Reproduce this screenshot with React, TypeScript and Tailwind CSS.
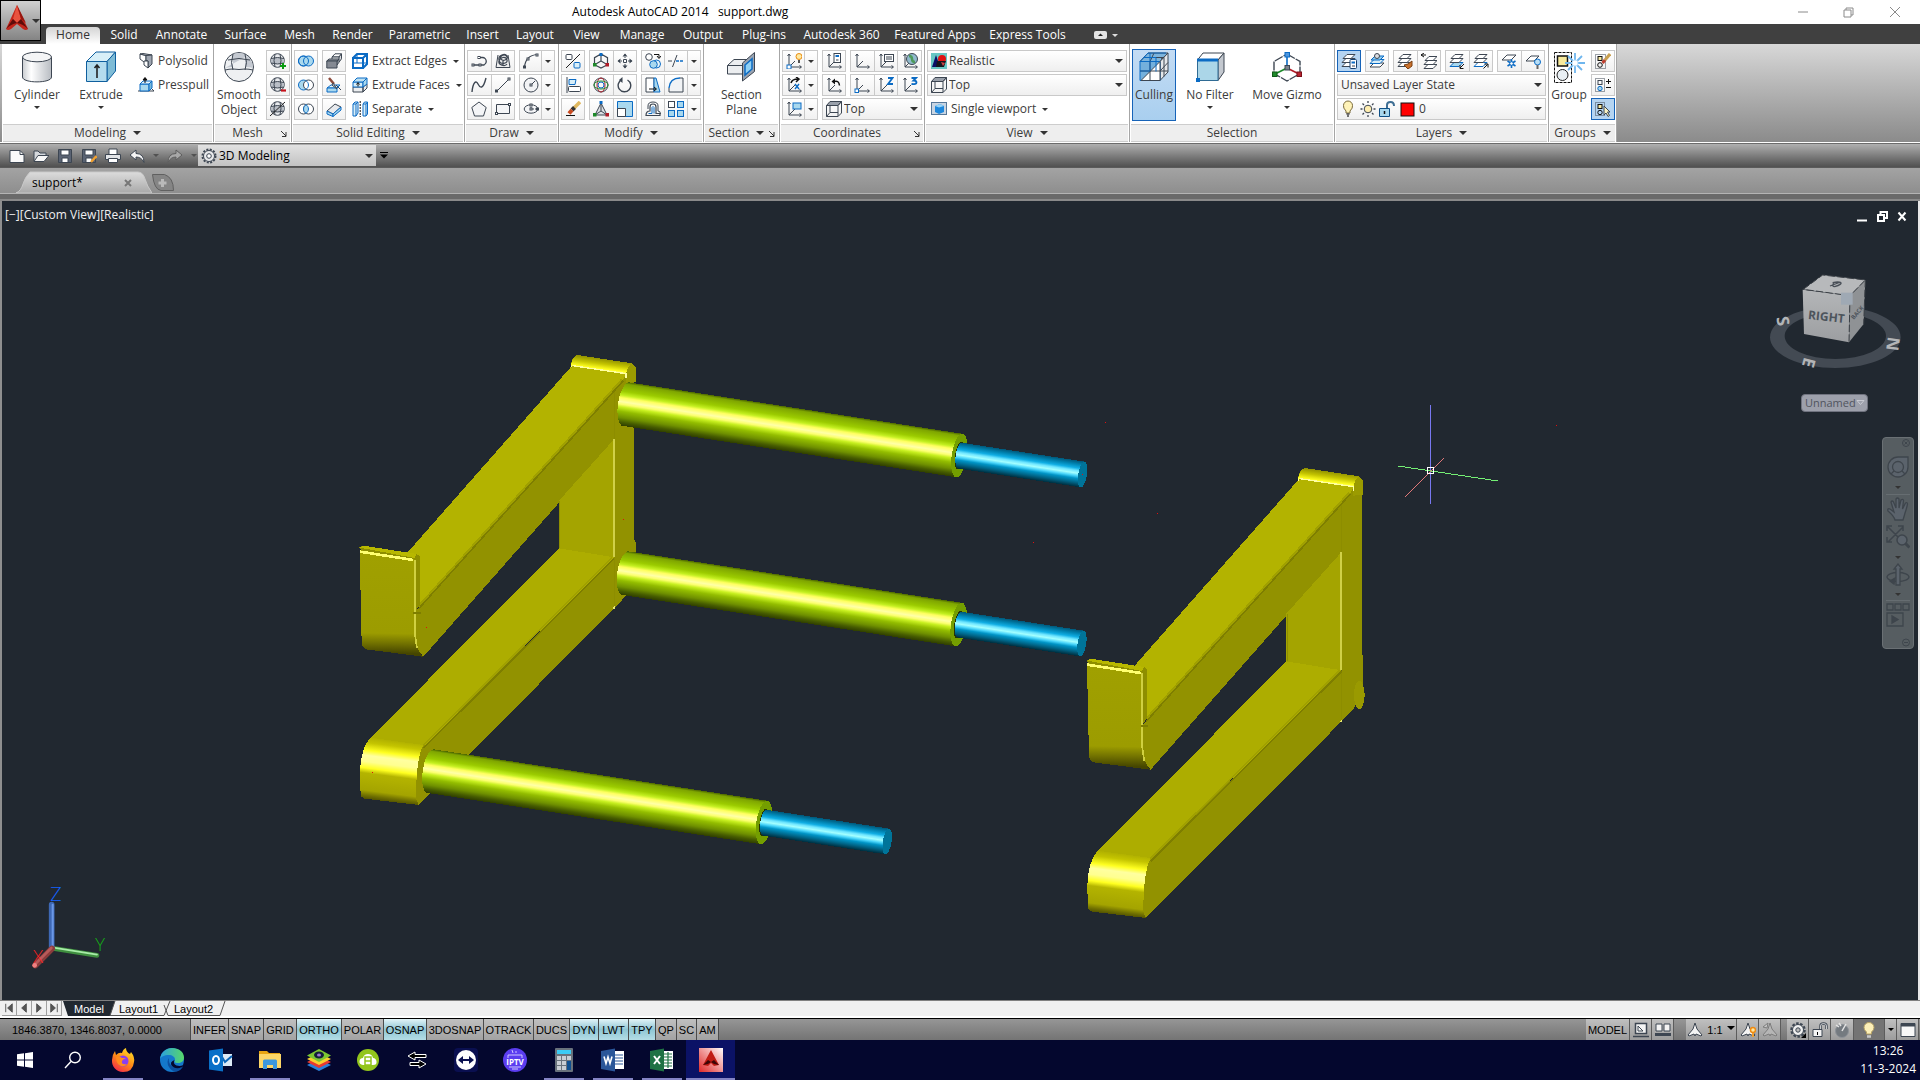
import type { ReactNode } from 'react';
import clsx from 'clsx';

const INK = '#3d4652';
const BLUE = '#0b6bc4';
const SKY = '#a9d8ee';
const UI_FONT = "font-['Open_Sans','Noto_Sans',sans-serif]";
const STATUS_FONT = "font-['Liberation_Sans',Arial,sans-serif]";

function Icon({
  children,
  size = 16,
  className,
}: {
  children: ReactNode;
  size?: number;
  className?: string;
}) {
  return (
    <svg
      aria-hidden="true"
      width={size}
      height={size}
      viewBox={`0 0 ${size} ${size}`}
      fill="none"
      stroke={INK}
      className={clsx('shrink-0', className)}
    >
      {children}
    </svg>
  );
}

function Caret({ large, className }: { large?: boolean; className?: string }) {
  return (
    <svg
      aria-hidden="true"
      width={large ? 8 : 6}
      height={large ? 4 : 3}
      viewBox="0 0 8 4"
      className={clsx('shrink-0 fill-[#333333]', className)}
    >
      <path d="M0 0h8L4 4z" />
    </svg>
  );
}

/* ---------- small ribbon drawings ---------- */

function Globe() {
  return (
    <>
      <circle cx="7.5" cy="7.5" r="6.8" fill="#e9ebee" />
      <path d="M1 6q6.500-2.500 13 0v4q-6.500 2-13 0z" fill="#b9bec6" stroke="none" />
      <path d="M1 5.500q6.500-2 13 0M1 10q6.500 2 13 0M5 1.200q-2 6.300 0 12.600M10 1.200q2 6.300 0 12.600" />
    </>
  );
}

function Axes() {
  return <path d="M3 1v13h12M3 14 9 8M1.500 3 3 1l1.500 2M13.500 12.500 15.500 14l-2 1.500" strokeWidth="1" />;
}

function Sheets({ accent = INK, fill = '#ffffff' }: { accent?: string; fill?: string }) {
  return (
    <>
      <path d="M1 13.500 5 9.500h9l-4 4z" fill={fill} stroke={accent} />
      <path d="M1 9.500 5 5.500h9l-4 4z" fill="#ffffff" />
      <path d="M2 5.500 6 1.500h8l-4 4z" fill="#ffffff" />
    </>
  );
}

const Node = ({ x, y }: { x: number; y: number }) => (
  <rect x={x - 1} y={y - 1} width="2" height="2" fill="#ffffff" strokeWidth="1" />
);

const glyphs = {
  polysolid: (
    <>
      <path d="M2 1 8 2.500v5L6 9 2 6z" fill="#ffffff" />
      <path d="M2 1 5 .500 14 2 8 2.500z" fill="#c5c9d0" />
      <path d="M8 2.500 14 2v9l-4 4V8l-2-.500z" fill="#9fa6b1" />
      <path d="M6 8h4v7l-4-3z" fill="#ffffff" />
    </>
  ),
  presspull: (
    <>
      <path d="M0 14h16l-3-3" />
      <path d="M2 7h9v7H2z" fill={SKY} stroke={BLUE} />
      <path d="M2 7 5 4h9l-3 3z" fill="#e4f4fb" stroke={BLUE} />
      <path d="M11 7l3-3v7l-3 3z" fill="#79b9da" stroke={BLUE} />
      <path d="M7 6V1M5 3l2-2.500L9 3z" fill="#111" stroke="#111" />
    </>
  ),
  meshMore: (
    <>
      <Globe />
      <path d="M13 10v6M10 13h6" stroke="#0a9a12" strokeWidth="2" />
    </>
  ),
  meshLess: (
    <>
      <Globe />
      <path d="M11 13.500h5" stroke="#c4101a" strokeWidth="2.200" />
    </>
  ),
  meshRefine: (
    <>
      <Globe />
      <path d="M0 15 15 1" stroke="#222" />
    </>
  ),
  union: (
    <g stroke={BLUE}>
      <circle cx="5.500" cy="8" r="5" fill={SKY} />
      <circle cx="10.500" cy="8" r="5" fill={SKY} />
      <circle cx="5.500" cy="8" r="5" />
    </g>
  ),
  subtract: (
    <>
      <circle cx="5.500" cy="8" r="5" fill={SKY} stroke={BLUE} />
      <circle cx="10.500" cy="8" r="5" fill="#ffffff" />
      <path d="M8 3.700a5 5 0 0 1 0 8.600" stroke={BLUE} />
    </>
  ),
  intersect: (
    <>
      <circle cx="5.500" cy="8" r="5" fill="#fff" />
      <circle cx="10.500" cy="8" r="5" fill="#fff" />
      <path d="M8 3.700a5 5 0 0 1 0 8.600 5 5 0 0 1 0-8.600z" fill={SKY} stroke={BLUE} />
    </>
  ),
  interfere: (
    <>
      <path d="M6 4 9 .800h6.500L13 4z" fill="#fff" />
      <path d="M13 4l2.500-3.200v5L11 12V8z" fill="#d7dade" />
      <path d="M6 4h7v4H6z" fill="#eee" />
      <path d="M.800 8 3 6h10l-2 2z" fill="#a2a6ad" />
      <path d="M.800 8H11v7H.800z" fill="#858a93" />
    </>
  ),
  slice: (
    <>
      <path d="M1 11 5 8h9l-3 3z" fill="#e4f4fb" stroke={BLUE} />
      <path d="M1 11h10v4H1z" fill={SKY} stroke={BLUE} />
      <path d="M10 8l5 5" />
      <path d="M3 1l5 6" stroke="#8c4a3c" strokeWidth="2.500" />
      <path d="M7 6l4 6-5-4z" fill="#d5d8dd" />
    </>
  ),
  thicken: (
    <>
      <path d="M1 10 9 3l6 3-8 7z" fill="#e8eaed" />
      <path d="M1 10v3l6 2.500V13z" fill={SKY} stroke={BLUE} />
      <path d="M7 13v2.500L15 9V6z" fill={SKY} stroke={BLUE} />
    </>
  ),
  extractEdges: (
    <g stroke={BLUE} strokeWidth="2">
      <path d="M1 5h10v10H1zM1 5l4-4h10l-4 4M15 1v10l-4 4" />
      <path d="M5 1v9H1M5 10h10" strokeWidth="1" />
    </g>
  ),
  extrudeFaces: (
    <>
      <path d="M1 10h10v5H1zM11 10l4-3v4l-4 4z" fill="#eceef0" />
      <path d="M1 5h10v5H1z" fill="#d8eef8" stroke={BLUE} />
      <path d="M1 5 5 1h10l-4 4z" fill="#bfe2f2" stroke={BLUE} />
      <path d="M11 5l4-4v6l-4 3z" fill={SKY} stroke={BLUE} />
      <path d="M6 9.500V6M4.500 7.500 6 5.500l1.500 2" stroke="#111" />
    </>
  ),
  separate: (
    <>
      <path d="M1 3h3v12H1zM1 3l2-2h3L4 3M6 1v11l-2 3" fill="#d8eef8" stroke={BLUE} />
      <path d="M11 3h3v12h-3zM11 3l1.500-2h3L14 3M15.500 1v12L14 15" fill="#d8eef8" stroke={BLUE} />
      <path d="M8.200 0v16" stroke="#111" strokeDasharray="2 1" />
    </>
  ),
  polyline: (
    <>
      <path d="M1.500 12h12M9 4.500h2.500a3.700 3.700 0 0 1 0 7.500H2" strokeWidth="1.300" />
      <Node x={2} y={12} />
      <Node x={9} y={12} />
      <Node x={8} y={4.5} />
    </>
  ),
  helix: (
    <>
      <path d="M3 2 1 14.500h14L13 2" fill="#eee" />
      <path d="M12 4c-2-4-8-1-6 2s8 0 6-3-9-1-8 4 9 4 8 0-7-3-8 1 6 6 8 3M8 8v5" strokeWidth="1.200" />
    </>
  ),
  arc: (
    <>
      <path d="M1.500 14.500C2 7 6 2 14.500 1.500" strokeWidth="1.200" />
      <Node x={1.5} y={14} />
      <Node x={5} y={6} />
      <Node x={14} y={2} />
    </>
  ),
  spline: <path d="M1 15C2 5 5 3 7 7s5 6 8-6" strokeWidth="1.400" />,
  line: (
    <>
      <path d="M2 14 14 2" />
      <Node x={1.5} y={14} />
      <Node x={14} y={2} />
    </>
  ),
  circle: (
    <>
      <circle cx="8" cy="8" r="7" fill="#f2f3f5" />
      <path d="M8 8l4-4" />
      <Node x={8} y={8} />
    </>
  ),
  polygon: <path d="M8 1l7.200 5.500L12.500 15h-9L.800 6.500z" fill="#f4f5f7" />,
  rectangle: (
    <>
      <path d="M1.500 3.500h13v9h-13z" fill="#f4f5f7" />
      <Node x={14.5} y={3.5} />
      <Node x={1.5} y={12.5} />
    </>
  ),
  ellipse: (
    <>
      <ellipse cx="8" cy="8" rx="6.800" ry="4.200" fill="#f4f5f7" />
      <path d="M8 3v5h6" strokeDasharray="2 1" />
      <Node x={8} y={8} />
      <Node x={8} y={4} />
      <Node x={14.5} y={8} />
    </>
  ),
  mirror3d: (
    <>
      <rect x="1" y="1.500" width="6" height="5" rx="1" fill="#fff" />
      <rect x="9" y="9.500" width="6" height="5.500" rx="1" fill="#d8eef8" stroke={BLUE} />
      <path d="M1 15 15 1" stroke="#222" />
    </>
  ),
  gizmoMove: (
    <>
      <path d="M8 1l6.500 3.700v7L8 15l-6.500-3.300v-7zM8 1v7l6 3.500M8 8l-6 3.500" strokeWidth="1.200" />
      <rect x="6.500" y="0" width="3" height="3" fill={BLUE} stroke="none" />
      <rect x="0" y="10" width="3.500" height="3.500" fill="#1e8a2a" stroke="none" />
      <rect x="12.500" y="10" width="3.500" height="3.500" fill="#b01c28" stroke="none" />
    </>
  ),
  move: (
    <>
      <path d="M8 1v4M8 11v4M1 8h4M11 8h4" strokeDasharray="2 1" />
      <path d="M5.500 3.500 8 .500l2.500 3zM5.500 12.500 8 15.500l2.500-3zM3.500 5.500.500 8l3 2.500zM12.500 5.500 15.500 8l-3 2.500z" fill={INK} stroke="none" />
      <path d="M6.500 6.500h3v3h-3z" fill="#fff" />
    </>
  ),
  copy: (
    <>
      <circle cx="4" cy="4" r="3.300" fill="#fff" />
      <circle cx="11.500" cy="11" r="4" fill="#e6f4fb" stroke={BLUE} />
      <circle cx="8.500" cy="11.500" r="3.800" fill={SKY} stroke={BLUE} />
      <path d="M9 1.500h5v3M12 3l2 2.500L16 3" stroke="#111" />
    </>
  ),
  trim: (
    <>
      <path d="M0 8h4M4.500 14 9 2" stroke={INK} />
      <path d="M8 8h8" stroke={BLUE} strokeDasharray="3 1" strokeWidth="1.300" />
    </>
  ),
  align3d: (
    <>
      <path d="M2 0v16" />
      <path d="M4 2.500h7l-1 5H4z" fill="#d8eef8" stroke={BLUE} />
      <rect x="3.500" y="9.500" width="12" height="5" rx="1" fill="#fff" />
    </>
  ),
  gizmoRotate: (
    <>
      <circle cx="8" cy="8" r="7" />
      <ellipse cx="8" cy="8" rx="4" ry="7" stroke="#b01c28" />
      <ellipse cx="8" cy="8" rx="7" ry="4" stroke="#1e8a2a" />
      <circle cx="8" cy="8" r="3" stroke={BLUE} />
    </>
  ),
  rotate: (
    <>
      <path d="M10.500 3A6.300 6.300 0 1 1 5 2.700" strokeWidth="1.400" />
      <path d="M5.500 0v6L2 3z" fill={INK} stroke="none" />
    </>
  ),
  stretch: (
    <>
      <path d="M1 1h8v14H1z" fill="#fff" />
      <path d="M9 1h2l4 14H9z" fill={SKY} stroke={BLUE} />
      <path d="M4 12h7M9 10l2.500 2L9 14" stroke="#111" />
    </>
  ),
  fillet: (
    <>
      <path d="M1 15C1 6 5 1 12 1h3v14z" fill="#f1f3f5" stroke="none" />
      <path d="M1 11C1.500 5 5 1 12 1" stroke={BLUE} strokeWidth="1.400" />
      <path d="M12 1h3v14H1v-4" />
    </>
  ),
  erase: (
    <>
      <path d="M1 14.500h9" stroke="#111" />
      <path d="M15 1 9 7" stroke="#e0b860" strokeWidth="3.500" />
      <path d="M9.500 6.500 7 9" stroke="#333" strokeWidth="4" />
      <path d="M7 9l-3 3.500" stroke="#c84a20" strokeWidth="4" />
    </>
  ),
  gizmoScale: (
    <>
      <path d="M8 2 2 14h12zM8 2v8l6 4M8 10l-6 4" fill="#dcdfe3" />
      <rect x="6.500" y="0" width="3" height="3" fill={BLUE} stroke="none" />
      <rect x="0" y="12" width="3.500" height="3.500" fill="#1e8a2a" stroke="none" />
      <rect x="12.500" y="12" width="3.500" height="3.500" fill="#b01c28" stroke="none" />
    </>
  ),
  scale: (
    <>
      <path d="M.500.500h15v15H.500z" fill={SKY} stroke={BLUE} />
      <path d="M.500 7.500h8v8h-8z" fill="#fff" />
    </>
  ),
  offset: (
    <>
      <path d="M1 14.500h14v-2h-4V6q0-3-3-3T5 6v4q-4 0-4 4.500z" strokeWidth="1.200" />
      <path d="M3 8V5q0-4 5-4t5 4v5q2.500 0 2.500 3" />
      <path d="M3.500 12.500H7V6.500q1-2 2 0v6" stroke={BLUE} />
    </>
  ),
  array: (
    <>
      <rect x="0.500" y="0.500" width="6" height="6" fill="#fff" />
      <rect x="9.500" y="0.500" width="6" height="6" fill={SKY} stroke={BLUE} />
      <rect x="0.500" y="9.500" width="6" height="6" fill={SKY} stroke={BLUE} />
      <rect x="9.500" y="9.500" width="6" height="6" fill={SKY} stroke={BLUE} />
    </>
  ),
  ucsLight: (
    <>
      <Axes />
      <rect x="1" y="12" width="4" height="4" fill="#fff" stroke={BLUE} />
      <circle cx="13" cy="3.500" r="3" fill="#ffe9a0" stroke="#e88b10" />
      <path d="M13 7v3" stroke="#555" strokeWidth="2" />
    </>
  ),
  ucsX: (
    <>
      <Axes />
      <path d="M5 6q1-4 7-4M10 0l3 2-3 3" stroke="#111" strokeWidth="1.500" />
      <path d="M9 7l4 5M13 7l-4 5" stroke={BLUE} strokeWidth="1.400" />
    </>
  ),
  ucsView: (
    <>
      <Axes />
      <rect x="7" y="2" width="8" height="6" fill={SKY} stroke={BLUE} />
    </>
  ),
  ucsManager: (
    <>
      <Axes />
      <rect x="8" y=".500" width="6.500" height="9" fill="#fff" />
      <path d="M9.500 3H13" stroke={BLUE} strokeWidth="2" />
      <path d="M10 7h2.500" />
    </>
  ),
  ucsPrevious: (
    <>
      <Axes />
      <path d="M5.500 4.500 9 1.500v6z" fill="#111" stroke="none" />
      <path d="M8 4.500q5-1.500 5.500 4" stroke="#111" strokeWidth="1.500" />
    </>
  ),
  ucs: <Axes />,
  ucsNamed: (
    <>
      <Axes />
      <rect x="6.500" y="1.500" width="9" height="7" fill="#fff" />
      <path d="M8 4h6M8 6h6" />
    </>
  ),
  ucsWorld: (
    <>
      <Axes />
      <circle cx="10" cy="6" r="5.500" fill="#8fb9cc" />
      <path d="M7 3q3 0 3 3t3 3" stroke="#4d9a5a" strokeWidth="2.500" />
    </>
  ),
  ucsOrigin: (
    <>
      <Axes />
      <rect x="1" y="12" width="3.500" height="3.500" fill="#fff" stroke={BLUE} />
    </>
  ),
  ucsZ: (
    <>
      <Axes />
      <path d="M10 1h4.500L10 7h5" stroke={BLUE} strokeWidth="1.800" />
    </>
  ),
  ucs3: (
    <>
      <Axes />
      <path d="M9.500 1h4.500l-2.500 2.500q3 0 3 2t-5 1.500" stroke={BLUE} strokeWidth="1.800" />
    </>
  ),
  cubeTop: (
    <>
      <path d="M.500 4.500 4 .500h11.500l-3.500 4z" fill="#9aa1ab" />
      <path d="M.500 4.500H12v11H.500zM12 4.500l3.500-4V12L12 15.500M4 4.500v7h8M4 11.500l-3.500 4" fill="none" />
    </>
  ),
  realistic: (
    <>
      <rect width="16" height="16" fill="#67c7c4" stroke="none" />
      <path d="M5 2 9 14H1z" fill="#0b0f66" stroke="none" />
      <circle cx="11" cy="6" r="4" fill="#e01212" stroke="none" />
      <path d="M6 8h9l-2 6H5z" fill="#15151c" stroke="none" />
      <path d="M10 9l4 1-2 3z" fill="#c44" stroke="none" />
    </>
  ),
  viewport: (
    <>
      <rect x=".500" y="1.500" width="15" height="12" fill="#c9d5e2" stroke="#56789a" />
      <path d="M4 5l5-2 4 2v6l-5 2-4-2z" fill="#1e88dd" stroke="none" />
      <path d="M4 5l5-2 4 2-5 1.500z" fill="#9bd5f8" stroke="none" />
    </>
  ),
  layerProps: (
    <>
      <Sheets />
      <rect x="9" y="6.500" width="6.500" height="9" rx="1" fill="#fff" stroke="#17406e" />
      <path d="M10.500 9.500H14" stroke={BLUE} strokeWidth="2" />
      <path d="M11 13h3" />
    </>
  ),
  layerState: (
    <>
      <path d="M1 14 5 10h10l-4 4z" fill="#fff" />
      <path d="M1 10.500 5 6.500h10l-4 4z" fill="#d8eef8" stroke={BLUE} />
      <path d="M2 7 6 3h9l-4 4z" fill="#8fcdf0" stroke={BLUE} />
      <circle cx="8" cy="3" r="2.500" fill="#d9dce0" />
    </>
  ),
  layerMatch: (
    <>
      <Sheets />
      <path d="M15 8l-4 3-4 1 4 4 4-3z" fill="#c9712c" stroke="#7a3f12" />
    </>
  ),
  layerPrevious: (
    <>
      <g transform="translate(2 2)">
        <Sheets />
      </g>
      <path d="M0 2h5M3 0 0 2l3 2" stroke="#111" />
    </>
  ),
  layerIsolate: (
    <>
      <Sheets accent={BLUE} fill={SKY} />
      <path d="M15 11l-4 4M11 12v3.500h3.500" stroke="#111" />
    </>
  ),
  layerUnisolate: (
    <>
      <Sheets accent={BLUE} />
      <path d="M10.500 15.500l4-4M11.500 11h3.500v3.500" stroke="#111" />
    </>
  ),
  layerFreeze: (
    <>
      <path d="M1 7 6 2h9l-5 5z" fill="#fff" />
      <path d="M10.500 6v9M6.500 8l8 5M14.500 8l-8 5" stroke={BLUE} strokeWidth="1.600" />
      <circle cx="10.500" cy="10.500" r="1.800" fill="#fff" stroke={BLUE} />
    </>
  ),
  layerOff: (
    <>
      <path d="M1 8 6 3h8l-5 5z" fill="#fff" />
      <circle cx="12.500" cy="9" r="3" fill="#b9def5" stroke={BLUE} />
      <path d="M12.500 12v4" stroke="#666" strokeWidth="2" />
    </>
  ),
  ungroup: (
    <>
      <rect x=".500" y="1.500" width="10" height="14" strokeDasharray="1 1" />
      <rect x="3" y="3.500" width="4" height="4" fill="#f8e9a0" stroke="#111" />
      <circle cx="5" cy="12" r="2.300" stroke="#111" />
      <path d="M15 1 10 7" stroke="#c9a050" strokeWidth="3" />
      <path d="M10 7l-2.500 3" stroke="#c04030" strokeWidth="3" />
    </>
  ),
  groupEdit: (
    <>
      <rect x=".500" y="1.500" width="9" height="13" strokeDasharray="1 1" />
      <rect x="3" y="3.500" width="4" height="4" />
      <circle cx="5" cy="11.500" r="2.200" fill={SKY} stroke={BLUE} />
      <path d="M11 4.500h5M13.500 2v5M11 10.500h5" stroke="#111" />
    </>
  ),
  groupSelect: (
    <>
      <rect x=".500" y="1.500" width="9" height="13" strokeDasharray="1 1" />
      <rect x="3" y="3.500" width="4" height="4" fill="#f8e9a0" stroke="#111" />
      <circle cx="5" cy="11.500" r="2.200" stroke="#111" />
      <path d="M9 5v9l2-2 2 3.500 1.500-1-2-3.500H15z" fill="#fbf3c2" />
    </>
  ),
};

type GlyphName = keyof typeof glyphs;

/* ---------- large ribbon drawings ---------- */

const bigGlyphs = {
  cylinder: (
    <>
      <defs>
        <linearGradient id="cyl">
          <stop offset="0" stopColor="#c9ccd0" />
          <stop offset=".3" stopColor="#ffffff" />
          <stop offset="1" stopColor="#b8bcc2" />
        </linearGradient>
      </defs>
      <path d="M1.500 6v20c0 6.500 29 6.500 29 0V6z" fill="url(#cyl)" />
      <ellipse cx="16" cy="6" rx="14.500" ry="4.800" fill="#f4f5f6" />
    </>
  ),
  extrude: (
    <g stroke="#0f5f9e">
      <path d="M1.500 10.500 11 1h19.500L22 10.500z" fill="#d8eff8" />
      <path d="M22 10.500 30.500 1v19L22 30.500z" fill="#7fbcd6" />
      <path d="M1.500 10.500H22v20H1.500z" fill="#b4dcee" />
      <path d="M12 27V14M9.500 17l2.500-3 2.500 3" stroke="#222" strokeWidth="1.600" />
    </g>
  ),
  smooth: (
    <>
      <circle cx="16" cy="16" r="14.500" fill="#eef0f2" />
      <path d="M10 3q6-2 12 0l1.500 6q-7-1.500-15 0zM2 17q4-1 8-1V9q6-1 12 0v7q5 0 8 1 0-8-6-12" fill="#c4c9d1" stroke="none" />
      <path d="M2 19q4-1 8-1M22 18q4 0 8 1M10 18q6 1 12 0M5 9q11-3 22 0M10 3Q7 12 10 19M22 3q3 9 0 16" />
    </>
  ),
  section: (
    <>
      <path d="M1.500 14.500 8 8.500h14v13L16 23H1.500z" fill="#eceef0" />
      <path d="M1.500 14.500h15M22 8.500l-6 6" />
      <path d="M16.500 12 28.500 1.500v19L16.500 30z" fill="#9aa3b0" />
      <path d="M19 14l7-6v10l-7 6z" fill="#8fd0f5" stroke={BLUE} strokeWidth="1.500" />
    </>
  ),
  culling: (
    <>
      <path d="M2 10.500 10 2h20l-8 8.500z" fill="#7db4dc" />
      <path d="M22 10.500 30 2v19l-8 8.500z" fill="#e5e8eb" />
      <path d="M2 10.500h20v19H2z" fill="#74b0dc" stroke={BLUE} />
      <path d="M22 10.500v19H3z" fill="#ffffff" />
      <path d="M2 20h28M12 10.500v19M6 6.500h20v19M16 2l-4 8.500M26 6l-3 2M22 20l8-8.500" />
      <path d="M2 10.500 10 2h18M2 20h10V2M6 6.500h12v14" stroke={BLUE} />
    </>
  ),
  noFilter: (
    <>
      <path d="M3.500 9 9 2h21l-6 7z" fill="#fff" />
      <path d="M24 9l6-7v19l-6 8.500z" fill="#c3c8cf" />
      <path d="M3.500 9H24v20.500H3.500z" fill="#abd6e8" stroke="#2f6b94" />
      <path d="M3 9h21" stroke={BLUE} strokeWidth="3" />
      <rect x="2" y="27" width="4" height="4" fill={BLUE} stroke="none" />
    </>
  ),
  gizmo: (
    <>
      <path d="M16 3l13 7.500v12L16 30 3 22.500v-12z" strokeWidth="1.400" strokeDasharray="9 1" />
      <path d="M16 4v13" stroke={BLUE} strokeWidth="1.600" />
      <path d="M16 17 4 23" stroke="#1e8a2a" strokeWidth="1.600" />
      <path d="M16 17l12 6" stroke="#b01c28" strokeWidth="1.600" />
      <rect x="14" y="1.500" width="4.500" height="4.500" fill="#4e95dd" stroke={BLUE} />
      <rect x="14" y="14.500" width="4.500" height="4.500" fill="#7b828c" />
      <rect x="1.500" y="21" width="4.500" height="4.500" fill="#1e8a2a" stroke="#0e5a16" />
      <rect x="26" y="21" width="4.500" height="4.500" fill="#b82430" stroke="#7a0e18" />
    </>
  ),
  group: (
    <>
      <rect x="1.500" y="1.500" width="17" height="30" stroke="#111" strokeDasharray="3 1" />
      <rect x="4.500" y="5" width="10" height="10" fill="#f7ea9c" stroke="#111" strokeWidth="1.500" />
      <circle cx="9.500" cy="24" r="5.500" fill="#eaf0f4" stroke="#222" />
      <path d="M22 2v20M12 12h20M15 5l14 14M29 5 15 19" stroke="#6fb6ee" strokeWidth="1.800" />
      <circle cx="22" cy="12" r="3" fill="#fff" stroke="#bfe2fb" />
    </>
  ),
};

/* ---------- ribbon controls ---------- */

function Panel({
  title,
  width,
  menu,
  launcher,
  children,
}: {
  title: string;
  width: string;
  menu?: boolean;
  launcher?: boolean;
  children: ReactNode;
}) {
  return (
    <section className={clsx('flex shrink-0 flex-col border-r border-[#a6a6a6] bg-white', width)}>
      <div className="flex h-20 items-start gap-1 px-[2px] pt-[6px]">{children}</div>
      <div className="mx-px flex h-[18px] items-center border-y border-[#cdcdcd] bg-[#eeeeee]">
        <h2 className="flex flex-1 items-center justify-center gap-[7px] leading-4">
          {title}
          {menu && <Caret large />}
        </h2>
        {launcher && (
          <button type="button" aria-label={`${title} settings`} className="mr-[3px]">
            <svg width="7" height="7" viewBox="0 0 7 7" fill="none" stroke="#333">
              <path d="M1 1l5 5M6 2v4.500H2" />
            </svg>
          </button>
        )}
      </div>
    </section>
  );
}

function Tools({
  items,
  drop,
  width,
  active,
}: {
  items: GlyphName[];
  drop?: boolean;
  width: string;
  active?: boolean;
}) {
  return (
    <div
      className={clsx(
        'flex h-[22px] border',
        active
          ? 'border-[#1663b8] bg-[#b5d4f1]'
          : 'divide-x divide-[#c9c9c9] border-[#c9c9c9] bg-linear-to-b from-white to-[#f1f1f1]',
        width
      )}
    >
      {items.map((name) => (
        <button key={name} type="button" aria-label={name} className="flex flex-1 items-center justify-center">
          <Icon>{glyphs[name]}</Icon>
        </button>
      ))}
      {drop && (
        <button
          type="button"
          aria-label={`${items[0]} options`}
          className="flex w-[12px] items-center justify-center"
        >
          <Caret />
        </button>
      )}
    </div>
  );
}

function Stack({ children }: { children: ReactNode }) {
  return <div className="flex flex-col gap-[2px]">{children}</div>;
}

function BigButton({
  icon,
  lines,
  width,
  drop,
  active,
}: {
  icon: keyof typeof bigGlyphs;
  lines: string[];
  width: string;
  drop?: boolean;
  active?: boolean;
}) {
  return (
    <button
      type="button"
      className={clsx(
        '-mt-px flex h-[72px] flex-col items-center border pt-px leading-[15px]',
        active ? 'border-[#1663b8] bg-linear-to-b from-[#c4dcf4] to-[#a9cfef]' : 'border-transparent',
        width
      )}
    >
      <Icon size={32} className="mb-1">
        {bigGlyphs[icon]}
      </Icon>
      {lines.map((line) => (
        <span key={line}>{line}</span>
      ))}
      {drop && <Caret className="mt-1" />}
    </button>
  );
}

function TextTool({ icon, label, drop }: { icon: GlyphName; label: string; drop?: boolean }) {
  return (
    <button type="button" className="flex h-[22px] items-center gap-1 pl-[2px] whitespace-nowrap">
      <Icon>{glyphs[icon]}</Icon>
      {label}
      {drop && <Caret className="ml-[2px]" />}
    </button>
  );
}

function Combo({
  label,
  value,
  icon,
  width,
}: {
  label: string;
  value: string;
  icon?: ReactNode;
  width: string;
}) {
  return (
    <label
      className={clsx(
        'flex h-[22px] items-center gap-[2px] border border-[#c9c9c9] bg-linear-to-b from-white to-[#efefef] px-[3px]',
        width
      )}
    >
      {icon}
      <select aria-label={label} className="min-w-0 flex-1 appearance-none bg-transparent outline-none">
        <option>{value}</option>
      </select>
      <Caret large />
    </label>
  );
}

const menuTabs: [string, string][] = [
  ['Solid', 'w-[46px]'],
  ['Annotate', 'w-[69px]'],
  ['Surface', 'w-[59px]'],
  ['Mesh', 'w-[49px]'],
  ['Render', 'w-[57px]'],
  ['Parametric', 'w-[77px]'],
  ['Insert', 'w-[49px]'],
  ['Layout', 'w-[56px]'],
  ['View', 'w-[47px]'],
  ['Manage', 'w-[64px]'],
  ['Output', 'w-[58px]'],
  ['Plug-ins', 'w-[64px]'],
  ['Autodesk 360', 'w-[91px]'],
  ['Featured Apps', 'w-[96px]'],
  ['Express Tools', 'w-[89px]'],
];

function AutodeskMark({ size }: { size: number }) {
  return (
    <svg aria-hidden="true" width={size} height={size} viewBox="0 0 24 26">
      <path d="M12 0 23 24q-2 2-5 0l-6-5-6 5q-3 2-5 0z" fill="#c4261c" />
      <path d="M12 0 8 14l4 4 4-4z" fill="#e8523f" />
      <path d="M8 14 1 24q5-5 11-6zM16 14l7 10q-5-5-11-6z" fill="#5e0d0b" />
      <path d="M12 0l4 14 5 4z" fill="#98160f" />
    </svg>
  );
}

function TitleBar() {
  return (
    <header className="relative flex h-6 items-center bg-white text-black">
      <h1 className="absolute left-[572px] whitespace-pre">Autodesk AutoCAD 2014   support.dwg</h1>
      <div className="ml-auto flex items-center gap-8 pr-[18px]">
        {[
          ['Minimize', 'M2 7h10'],
          ['Restore', 'M2 5h7v7H2zM4 5V3h7v7H9'],
          ['Close', 'M2 2l10 10M12 2 2 12'],
        ].map(([name, d]) => (
          <button key={name} type="button" aria-label={name}>
            <svg width="14" height="14" viewBox="0 0 14 14" fill="none" stroke="#8a8a8a">
              <path d={d} />
            </svg>
          </button>
        ))}
      </div>
      {/* application button hangs over the tab strip */}
      <button
        type="button"
        aria-label="Application menu"
        className="absolute top-0 left-0 z-10 flex h-[41px] w-[41px] items-start gap-[2px] border border-black bg-linear-to-b from-[#d0d0d0] to-[#848484] pt-1 pl-[3px]"
      >
        <AutodeskMark size={26} />
        <Caret large className="mt-[14px]" />
      </button>
    </header>
  );
}

function MenuTabs() {
  return (
    <nav className="flex h-5 items-end bg-[#404040] pl-[46px] text-white">
      <a
        href="#home"
        className="mr-px flex h-[17px] w-[54px] items-center justify-center rounded-t-sm bg-linear-to-b from-[#d4d4d4] to-white pb-[2px] text-[#333333]"
      >
        Home
      </a>
      {menuTabs.map(([name, width]) => (
        <a
          key={name}
          href={`#${name}`}
          className={clsx('flex h-[17px] items-center justify-center pb-[2px] whitespace-nowrap', width)}
        >
          {name}
        </a>
      ))}
      <button type="button" aria-label="Minimize ribbon" className="mb-[5px] ml-[22px] flex items-center gap-[5px]">
        <svg width="13" height="8" viewBox="0 0 13 8">
          <rect width="13" height="8" rx="2" fill="#e4e4e4" />
          <path d="M4 5h5L6.500 2.500z" fill="#222" />
        </svg>
        <Caret className="fill-[#dddddd]" />
      </button>
    </nav>
  );
}

function Ribbon() {
  return (
    <div className="flex bg-linear-to-b from-[#d8d8d8] to-[#8b8b8b] pl-[2px] text-[#3c3c3c]">
      <Panel title="Modeling" width="w-[212px]" menu>
        <BigButton icon="cylinder" lines={['Cylinder']} width="w-[66px]" drop />
        <BigButton icon="extrude" lines={['Extrude']} width="w-[54px]" drop />
        <div className="ml-1 flex flex-col gap-[2px]">
          <TextTool icon="polysolid" label="Polysolid" />
          <TextTool icon="presspull" label="Presspull" />
        </div>
      </Panel>
      <Panel title="Mesh" width="w-[78px]" launcher>
        <BigButton icon="smooth" lines={['Smooth', 'Object']} width="w-[46px]" />
        <Stack>
          <Tools items={['meshMore']} width="w-6" />
          <Tools items={['meshLess']} width="w-6" />
          <Tools items={['meshRefine']} width="w-6" />
        </Stack>
      </Panel>
      <Panel title="Solid Editing" width="w-[173px]" menu>
        <Stack>
          <Tools items={['union']} width="w-6" />
          <Tools items={['subtract']} width="w-6" />
          <Tools items={['intersect']} width="w-6" />
        </Stack>
        <Stack>
          <Tools items={['interfere']} width="w-6" />
          <Tools items={['slice']} width="w-6" />
          <Tools items={['thicken']} width="w-6" />
        </Stack>
        <Stack>
          <TextTool icon="extractEdges" label="Extract Edges" drop />
          <TextTool icon="extrudeFaces" label="Extrude Faces" drop />
          <TextTool icon="separate" label="Separate" drop />
        </Stack>
      </Panel>
      <Panel title="Draw" width="w-[94px]" menu>
        <Stack>
          <Tools items={['polyline', 'helix']} width="w-12" />
          <Tools items={['spline', 'line']} width="w-12" />
          <Tools items={['polygon', 'rectangle']} width="w-12" />
        </Stack>
        <Stack>
          <Tools items={['arc']} drop width="w-9" />
          <Tools items={['circle']} drop width="w-9" />
          <Tools items={['ellipse']} drop width="w-9" />
        </Stack>
      </Panel>
      <Panel title="Modify" width="w-[145px]" menu>
        <Stack>
          <Tools items={['mirror3d']} width="w-6" />
          <Tools items={['align3d']} width="w-6" />
          <Tools items={['erase']} width="w-6" />
        </Stack>
        <Stack>
          <Tools items={['gizmoMove', 'move']} width="w-12" />
          <Tools items={['gizmoRotate', 'rotate']} width="w-12" />
          <Tools items={['gizmoScale', 'scale']} width="w-12" />
        </Stack>
        <Stack>
          <Tools items={['copy', 'trim']} drop width="w-15" />
          <Tools items={['stretch', 'fillet']} drop width="w-15" />
          <Tools items={['offset', 'array']} drop width="w-15" />
        </Stack>
      </Panel>
      <Panel title="Section" width="w-[76px]" menu launcher>
        <BigButton icon="section" lines={['Section', 'Plane']} width="w-full" />
      </Panel>
      <Panel title="Coordinates" width="w-[145px]" launcher>
        <Stack>
          <Tools items={['ucsLight']} drop width="w-9" />
          <Tools items={['ucsX']} drop width="w-9" />
          <Tools items={['ucsView']} drop width="w-9" />
        </Stack>
        <Stack>
          <div className="flex gap-1">
            <Tools items={['ucsManager']} width="w-6" />
            <Tools items={['ucs', 'ucsNamed', 'ucsWorld']} width="w-18" />
          </div>
          <div className="flex gap-1">
            <Tools items={['ucsPrevious']} width="w-6" />
            <Tools items={['ucsOrigin', 'ucsZ', 'ucs3']} width="w-18" />
          </div>
          <Combo label="UCS" value="Top" icon={<Icon>{glyphs.cubeTop}</Icon>} width="w-[100px]" />
        </Stack>
      </Panel>
      <Panel title="View" width="w-[205px]" menu>
        <Stack>
          <Combo label="Visual style" value="Realistic" icon={<Icon>{glyphs.realistic}</Icon>} width="w-[200px]" />
          <Combo label="Named view" value="Top" icon={<Icon>{glyphs.cubeTop}</Icon>} width="w-[200px]" />
          <div className="pl-[2px]">
            <TextTool icon="viewport" label="Single viewport" drop />
          </div>
        </Stack>
      </Panel>
      <Panel title="Selection" width="w-[205px]">
        <BigButton icon="culling" lines={['Culling']} width="w-[44px]" active />
        <BigButton icon="noFilter" lines={['No Filter']} width="w-[60px]" drop />
        <BigButton icon="gizmo" lines={['Move Gizmo']} width="w-[86px]" drop />
      </Panel>
      <Panel title="Layers" width="w-[214px]" menu>
        <Stack>
          <div className="flex gap-1">
            <Tools items={['layerProps']} width="w-6" active />
            <Tools items={['layerState']} width="w-6" />
            <Tools items={['layerMatch', 'layerPrevious']} width="w-12" />
            <Tools items={['layerIsolate', 'layerUnisolate']} width="w-12" />
            <Tools items={['layerFreeze', 'layerOff']} width="w-12" />
          </div>
          <Combo label="Layer state" value="Unsaved Layer State" width="w-[209px]" />
          <Combo label="Layer" value="0" icon={<LayerFlags />} width="w-[209px]" />
        </Stack>
      </Panel>
      <Panel title="Groups" width="w-[68px]" menu>
        <BigButton icon="group" lines={['Group']} width="w-[36px]" />
        <Stack>
          <Tools items={['ungroup']} width="w-6" />
          <Tools items={['groupEdit']} width="w-6" />
          <Tools items={['groupSelect']} width="w-6" active />
        </Stack>
      </Panel>
    </div>
  );
}

function LayerFlags() {
  return (
    <svg aria-hidden="true" width="76" height="18" viewBox="0 0 76 18" fill="none" stroke={INK}>
      <path d="M5 11Q2 8 2.500 5.500a4.500 4.500 0 0 1 9 0Q12 8 9 11v2H5z" fill="#fff3b8" stroke="#7a6a3a" />
      <path d="M5.500 14h3M6 16h2" stroke="#444" strokeWidth="1.500" />
      <circle cx="27" cy="9" r="3.800" fill="#ffeeb0" />
      <path d="M27 1v2M27 15v2M19.500 9h2M32.500 9h2M21.500 3.500 23 5M31 13l1.500 1.500M32.500 3.500 31 5M23 13l-1.500 1.500" strokeWidth="1.300" />
      <path d="M38.500 8.500h10v8h-10z" fill={SKY} stroke="#0e4f86" />
      <path d="M43.500 11v3" stroke="#111" strokeWidth="1.500" />
      <path d="M46 8V5q0-3 3.500-3T53 6" stroke="#3f6f94" strokeWidth="2" />
      <rect x="60" y="3" width="13" height="13" fill="#ff0000" stroke="#111" />
    </svg>
  );
}

/* ---------- quick access and file tabs ---------- */

function QuickAccess() {
  return (
    <div className="flex h-[25px] items-center border-t border-[#6c6c6c] border-b border-b-[#5a5a5a] bg-linear-to-b from-[#b0b0b0] to-[#505050] pl-[9px]">
      <div className="flex w-[189px] items-center gap-2">
        <button type="button" aria-label="New">
          <Icon>
            <path d="M1 2.500h10l4 4v8H1z" fill="#fafafa" />
            <path d="M11 2.500v4h4" />
          </Icon>
        </button>
        <button type="button" aria-label="Open">
          <Icon>
            <path d="M1 13V3h4l2 2h6v2" fill="#d5d8dc" />
            <path d="M1 13.500 5 7.500h11l-5 6z" fill="#f7f7f7" />
          </Icon>
        </button>
        <button type="button" aria-label="Save">
          <Icon>
            <path d="M1.500 1.500h13v13h-13z" fill="#5a6373" />
            <path d="M4 2h8v5H4zM5 10h6v4.500H5z" fill="#fff" />
          </Icon>
        </button>
        <button type="button" aria-label="Save As">
          <Icon>
            <path d="M1.500 1.500h13v13h-13z" fill="#5a6373" />
            <path d="M4 2h8v5H4zM5 10h6v4.500H5z" fill="#fff" />
            <path d="M15.500 8 10 14" stroke="#f0a030" strokeWidth="2.500" />
          </Icon>
        </button>
        <button type="button" aria-label="Plot">
          <Icon>
            <path d="M4 1h8v6H4z" fill="#fff" />
            <path d="M.500 6.500h15v5H.500z" fill="#e2e4e7" />
            <path d="M3.500 10.500h9v4h-9z" fill="#fff" />
          </Icon>
        </button>
        <button type="button" aria-label="Undo">
          <Icon>
            <path d="M1 7l6-5v3.500q8 0 8 9Q12.500 9 7 9v3z" fill="#f5f5f5" />
          </Icon>
        </button>
        <Caret className="opacity-60" />
        <button type="button" aria-label="Redo">
          <Icon>
            <path d="M15 7 9 2v3.500q-8 0-8 9Q3.500 9 9 9v3z" fill="#a8a8a8" stroke="#5e5e5e" />
          </Icon>
        </button>
        <Caret className="opacity-60" />
      </div>
      <label className="flex h-[21px] w-[178px] items-center gap-[2px] bg-linear-to-b from-[#e2e2e2] to-[#c2c2c2] px-[3px] text-black">
        <Icon>
          <circle cx="8" cy="8" r="6.500" strokeWidth="2" strokeDasharray="2 1.400" />
          <circle cx="8" cy="8" r="5.500" fill="#e9eaec" />
          <circle cx="8" cy="8" r="2.300" fill="#fff" />
        </Icon>
        <select aria-label="Workspace" className="min-w-0 flex-1 appearance-none bg-transparent outline-none">
          <option>3D Modeling</option>
        </select>
        <Caret large />
      </label>
      <button type="button" aria-label="Customize Quick Access Toolbar" className="ml-1">
        <svg width="8" height="7" viewBox="0 0 8 7">
          <path d="M0 0h8v1H0zM0 2.500h8l-4 4z" fill="#000" />
        </svg>
      </button>
    </div>
  );
}

function FileTabs() {
  return (
    <div className="flex h-[26px] items-end border-b border-[#b4b4b4] bg-linear-to-b from-[#a3a3a3] to-[#8e8e8e] pl-4">
      <div className="relative flex h-[22px] w-[136px] items-center pt-[2px] pl-4 text-black">
        <svg aria-hidden="true" className="absolute inset-0" width="136" height="22" viewBox="0 0 136 22">
          <defs>
            <linearGradient id="fileTab" x1="0" y1="0" x2="0" y2="1">
              <stop offset="0" stopColor="#dcdcdc" />
              <stop offset="1" stopColor="#a9a9a9" />
            </linearGradient>
          </defs>
          <path d="M0 22Q5 20 7 13T14 1h108q5 0 7 7t7 14z" fill="url(#fileTab)" stroke="#c9c9c9" />
        </svg>
        <span className="relative">support*</span>
        <button type="button" aria-label="Close support" className="absolute right-5">
          <svg width="8" height="8" viewBox="0 0 8 8" stroke="#777" strokeWidth="2">
            <path d="M1 1l6 6M7 1 1 7" />
          </svg>
        </button>
      </div>
      <button type="button" aria-label="New drawing" className="mb-[2px]">
        <svg width="22" height="17" viewBox="0 0 22 17">
          <path d="M.500.500h12q9 3 9 16H9q-7-1-8.500-16z" fill="#858585" stroke="#606060" />
          <path d="M10.500 5v8M6.500 9h8" stroke="#b9b9b9" strokeWidth="3" />
        </svg>
      </button>
    </div>
  );
}

/* ---------- drawing area ---------- */

/* Bracket outlines are in thirds of a pixel, local to the upper left bracket. */
function Bracket() {
  return (
    <g strokeWidth="0">
      {/* side faces */}
      <path
        d="M222 820 855 105l28 5v490l4 8v80l-25 75-42 45L385 1245 235 1395 212 1370V1260L248 1220 823 655V300L250 950l-25-30z"
        fill="#929200"
      />
      <ellipse cx="876" cy="726" rx="16" ry="42" fill="#9a9a00" />
      <path d="M824 140v660" stroke="#8a8a00" strokeWidth="2" />
      {/* upper beam */}
      <path d="M698 75 860 98l-8 18L240 790V650l-38-12z" fill="#b3b300" />
      <path d="M850 122 236 806" stroke="#7e7e00" strokeWidth="5" fill="none" />
      <path d="M846 118 236 798" stroke="#a0a000" strokeWidth="6" fill="none" />
      {/* post inner face */}
      <path d="M822 298v355l-165-28V482z" fill="#a4a400" />
      <path d="M660 484v140" stroke="#8f8f00" strokeWidth="3" />
      <path d="M822 296v355" stroke="#d0d048" strokeWidth="5" />
      {/* lower beam */}
      <path d="M657 625l166 27-575 570L85 1200z" fill="#adad00" />
      <path d="M823 655 250 1225" stroke="#7e7e00" strokeWidth="5" fill="none" />
      <path d="M817 652 248 1218" stroke="#a0a000" strokeWidth="5" fill="none" />
      <path d="M92 1193C70 1212 60 1262 60 1300l2 68 12 8 162 19-8-18q0-120 22-162z" fill="url(#nose)" />
      <path d="M816 808l8-2v-8z" fill="#e8e870" />
      {/* front plate */}
      <path d="M58 622 70 617l160 25 10 8v145l-18 25v60z" fill="#8e8e00" />
      <path d="M59 630l164 28-1 222q3 40 26 70l-170-22q-12-6-13-20z" fill="url(#plate)" />
      <path d="M60 623 70 617l160 25-6 12z" fill="#b8b800" />
      <path d="M60 635l160 25" stroke="#ffff70" strokeWidth="8" />
      <path d="M225 660v225l6 40" stroke="#d0d040" strokeWidth="5" fill="none" />
      <path d="M220 819h22" stroke="#7e7e00" strokeWidth="4" />
      {/* top cap */}
      <path d="M692 88q0-36 20-43l164 25 11 12v43l-30 3 1-25-160-25z" fill="#9b9b00" />
      <path d="M692 85q2-34 20-40l164 25q-14 8-18 33L698 77z" fill="url(#cap)" />
      <path d="M698 77l160 24v14" stroke="#ffffa0" strokeWidth="4" fill="none" />
    </g>
  );
}

function Rod({ x, y }: { x: number; y: number }) {
  return (
    <g transform={`translate(${x} ${y}) rotate(8.76)`}>
      <path d="M0-66H1015V66H0C-28 50-28-50 0-66z" fill="url(#tube)" />
      <ellipse cx="1015" cy="0" rx="23" ry="66" fill="#749e00" />
      <ellipse cx="1015" cy="0" rx="13" ry="42" fill="#24330a" />
      <path d="M1015-39H1389V39H1015C1000 30 1000-30 1015-39z" fill="url(#rod)" />
      <ellipse cx="1389" cy="0" rx="13" ry="39" fill="#007499" />
    </g>
  );
}

const stops = (list: [number, string][]) =>
  list.map(([offset, color]) => <stop key={offset} offset={offset} stopColor={color} />);

function Scene() {
  return (
    <svg
      role="img"
      aria-label="Support model"
      viewBox="2 201 1916 799"
      preserveAspectRatio="xMinYMin meet"
      className="absolute inset-0 h-full w-full"
    >
      <defs>
        <linearGradient id="tube" x1="0" y1="0" x2="0" y2="1">
          {stops([
            [0, '#4c6600'],
            [0.05, '#7fa600'],
            [0.22, '#9ccc00'],
            [0.31, '#c4f020'],
            [0.37, '#ffff60'],
            [0.46, '#ffffa8'],
            [0.52, '#fcff70'],
            [0.58, '#c8f020'],
            [0.68, '#93bd00'],
            [0.82, '#6f9000'],
            [0.92, '#465c00'],
            [1, '#2f3e00'],
          ])}
        </linearGradient>
        <linearGradient id="rod" x1="0" y1="0" x2="0" y2="1">
          {stops([
            [0, '#00587a'],
            [0.14, '#0084b2'],
            [0.28, '#10aee4'],
            [0.38, '#70e6ff'],
            [0.48, '#a4ffff'],
            [0.58, '#48d4fa'],
            [0.68, '#0094c6'],
            [0.84, '#006486'],
            [1, '#002e3e'],
          ])}
        </linearGradient>
        <linearGradient id="nose" gradientUnits="userSpaceOnUse" x1="168" y1="1200" x2="144" y2="1388">
          {stops([
            [0, '#adad00'],
            [0.1, '#c4c400'],
            [0.22, '#ffff20'],
            [0.3, '#ffffa0'],
            [0.4, '#ffff90'],
            [0.5, '#ffff20'],
            [0.58, '#b4b400'],
            [0.85, '#a4a400'],
            [0.93, '#707000'],
            [1, '#4a4a00'],
          ])}
        </linearGradient>
        <linearGradient id="plate" gradientUnits="userSpaceOnUse" x1="150" y1="640" x2="145" y2="940">
          {stops([
            [0, '#a0a000'],
            [0.8, '#9c9c00'],
            [0.9, '#727200'],
            [1, '#454500'],
          ])}
        </linearGradient>
        <linearGradient id="cap" gradientUnits="userSpaceOnUse" x1="790" y1="55" x2="785" y2="92">
          {stops([
            [0, '#8e8e00'],
            [0.45, '#c4c400'],
            [0.85, '#ffff20'],
            [1, '#ffffa0'],
          ])}
        </linearGradient>
        <linearGradient id="cubeFace" x1="0" y1="0" x2="0" y2="1">
          {stops([
            [0, '#b4b6b8'],
            [1, '#9c9ea1'],
          ])}
        </linearGradient>
      </defs>

      <g shapeRendering="crispEdges">
        <g transform="translate(340 340) scale(0.33333)">
          <Bracket />
        </g>
        <g transform="translate(1067.300 453) scale(0.33333)">
          <Bracket />
        </g>
        <g transform="translate(600 360) scale(0.33333)">
          <Rod x={75} y={132} />
          <Rod x={73} y={639} />
          <Rod x={-511} y={1233} />
        </g>
        <g fill="#e01010">
          {[
            [623, 519],
            [426, 627],
            [372, 772],
            [1105, 422],
            [1033, 542],
            [1157, 513],
            [1082, 474],
            [1556, 425],
          ].map(([x, y]) => (
            <rect key={x} x={x} y={y} width="1" height="1" />
          ))}
        </g>
        <g fill="none">
          <path d="M1430.500 405v99" stroke="#7878f0" />
          <path d="M1398 466l100 15" stroke="#74f074" />
          <path d="M1405 497l39-39" stroke="#e07878" />
          <rect x="1427.500" y="467.500" width="6" height="6" stroke="#ffffff" />
        </g>
      </g>

      {/* view cube and compass */}
      <g transform="translate(1740 250) scale(0.33333)">
        <path
          fillRule="evenodd"
          d="M90 262a196 92 0 1 0 392 0a196 92 0 1 0-392 0zM134 258a152 69 0 1 0 304 0a152 69 0 1 0-304 0z"
          fill="#434a53"
        />
        <path d="M190 118 248 75l128 15-46 47z" fill="#b7b9bb" />
        <path d="M188 119l142 18-3 140-135-25z" fill="url(#cubeFace)" />
        <path d="M330 137l46-47-5 132-44 55z" fill="#8f9295" />
        <path d="M190 118 248 75l128 15-46 47zM330 137l-3 140M376 90l-5 132" fill="none" stroke="#3a3f45" strokeWidth="3" strokeDasharray="22 7" />
        <rect x="303" y="128" width="35" height="36" fill="#9fa9b4" />
        <path d="M270 108l32-12M278 98q18-4 24 0t-18 12q-10 0-2-12z" fill="none" stroke="#4a5058" strokeWidth="4" />
      </g>
      <g className="font-['Open_Sans',sans-serif] font-bold" textAnchor="middle">
        <text transform="translate(1826 321) rotate(6)" fontSize="12" fill="#4d545c">
          RIGHT
        </text>
        <text transform="translate(1859 314) rotate(-50)" fontSize="6" fill="#4d545c">
          BACK
        </text>
        <g fontSize="17" fill="#b3b5b7">
          <text transform="translate(1777 322) rotate(80)">S</text>
          <text transform="translate(1803 361) rotate(105)">E</text>
          <text transform="translate(1887 343) rotate(98)">N</text>
        </g>
      </g>

      {/* UCS icon */}
      <g transform="translate(0 870) scale(0.33333)" strokeLinecap="round">
        <path d="M160 235l131 21" stroke="#3f8f3f" strokeWidth="14" />
        <path d="M160 233l131 21" stroke="#a8eca8" strokeWidth="5" />
        <path d="M155 104v130" stroke="#3e68b4" strokeWidth="17" />
        <path d="M158 104v130" stroke="#6a98e6" strokeWidth="6" />
        <path d="M156 236l-50 50" stroke="#8a3c3c" strokeWidth="18" />
        <path d="M154 234l-50 50" stroke="#b85a5a" strokeWidth="8" />
        <circle cx="104" cy="286" r="7" fill="#f08080" />
      </g>
      <g className="font-['Lato',sans-serif] font-light" textAnchor="middle">
        <text x="56" y="901" fontSize="19" fill="#1464ff">
          Z
        </text>
        <text x="100" y="951" fontSize="17" fill="#14b414">
          Y
        </text>
        <text x="38" y="963" fontSize="17" fill="#ff2020">
          X
        </text>
      </g>
    </svg>
  );
}

function NavigationBar() {
  return (
    <div className="absolute top-[236px] right-[4px] flex h-[212px] w-8 flex-col items-center rounded-sm border border-[#6a7074] bg-[#565d61] text-[#3e454c]">
      <button type="button" aria-label="Close navigation bar" className="mr-[3px] self-end">
        <svg width="8" height="9" viewBox="0 0 8 9" fill="none" stroke="currentColor">
          <circle cx="4" cy="5" r="3.500" />
          <path d="M2.500 3.500l3 3M5.500 3.500l-3 3" />
        </svg>
      </button>
      <button type="button" aria-label="Steering wheel" className="mt-2">
        <svg width="24" height="24" viewBox="0 0 24 24" fill="none" stroke="currentColor" strokeWidth="1.300">
          <path d="M12 2h10v10a10 10 0 1 1-10-10z" fill="#5b636c" />
          <circle cx="12" cy="12" r="5.500" />
          <path d="M8 16l-3 3M16 16l3 3" />
        </svg>
      </button>
      <Caret className="mt-[7px] fill-[#3e454c]" />
      <hr className="mt-[5px] w-6 border-[#666d71]" />
      <button type="button" aria-label="Pan" className="mt-[2px]">
        <svg width="24" height="24" viewBox="0 0 24 24" fill="#5b636c" stroke="currentColor" strokeWidth="1.300">
          <path d="M9 23Q8 19 2 14q-1-3 2-2l4 3L5 5q1-2 2.500 0L10 11V2q1.500-2 3 0v9l2-8q2-1.500 2.500.500L16.500 12l3-6q2-1 2 1-1 5-2.500 9-1 4-2 7z" />
        </svg>
      </button>
      <button type="button" aria-label="Zoom extents" className="mt-1">
        <svg width="24" height="24" viewBox="0 0 24 24" fill="none" stroke="currentColor" strokeWidth="1.500">
          <path d="M2 2l15 15M17 2 2 17M1 6V1h5M12 1h5v5M1 12v5h5" />
          <circle cx="16" cy="15" r="5" fill="#5b636c" />
          <path d="M19.500 18.500l4 4" strokeWidth="3" />
        </svg>
      </button>
      <Caret className="mt-[7px] fill-[#3e454c]" />
      <button type="button" aria-label="Orbit" className="mt-1">
        <svg width="24" height="24" viewBox="0 0 24 24" fill="none" stroke="currentColor" strokeWidth="1.300">
          <ellipse cx="12" cy="14" rx="11" ry="4.500" />
          <path d="M10 22V6H8l4-5 4 5h-2v16z" fill="#5b636c" />
          <path d="M9 15l-5 3 4 3z" fill="currentColor" />
        </svg>
      </button>
      <Caret className="mt-[6px] fill-[#3e454c]" />
      <hr className="mt-1 w-6 border-[#666d71]" />
      <button type="button" aria-label="ShowMotion" className="mt-[2px]">
        <svg width="24" height="24" viewBox="0 0 24 24" fill="none" stroke="currentColor" strokeWidth="1.300">
          <path d="M1 1h6v6H1zM9 1h6v6H9zM17 1h6v6h-6zM1 10h16v13H1z" />
          <path d="M6 13v7l6-3.500z" fill="currentColor" />
        </svg>
      </button>
      <button type="button" aria-label="Navigation bar options" className="mt-auto mr-[3px] mb-px self-end">
        <svg width="8" height="9" viewBox="0 0 8 9" fill="none" stroke="currentColor">
          <circle cx="4" cy="4.500" r="3.500" />
          <path d="M2 4.500h4" />
        </svg>
      </button>
    </div>
  );
}

function Viewport() {
  return (
    <main className="relative min-h-0 flex-1 border-x-2 border-r-[#e8e8e8] border-l-[#8f8f8f] bg-[#212830]">
      <Scene />
      <p className="absolute top-[6px] left-[3px] text-[#f0f0f0]">[−][Custom View][Realistic]</p>
      <div className="absolute top-[9px] right-[10px] flex items-center gap-2">
        {[
          ['Minimize viewport', 'M1 10.500h10'],
          ['Restore viewport', 'M2 5h6v6H2zM4.500 4V2H11v6H9'],
          ['Close viewport', 'M2.500 2.500l7 8M9.500 2.500l-7 8'],
        ].map(([name, d]) => (
          <button key={name} type="button" aria-label={name}>
            <svg width="12" height="13" viewBox="0 0 12 13" fill="none" stroke="#ffffff" strokeWidth="2">
              <path d={d} />
            </svg>
          </button>
        ))}
      </div>
      <button
        type="button"
        className="absolute top-[193px] right-[50px] flex h-[18px] w-[67px] items-center justify-between rounded-sm border border-[#70737f] bg-[#9da0ab] px-[3px] text-[11px] leading-4 text-[#50545e]"
      >
        Unnamed
        <svg width="9" height="6" viewBox="0 0 9 6" fill="none" stroke="#c8cad2" className="shrink-0">
          <path d="M1 .500h7l-3.500 4z" />
        </svg>
      </button>
      <NavigationBar />
    </main>
  );
}

/* ---------- layout tabs and status bar ---------- */

function LayoutTabs() {
  return (
    <div
      className={clsx(
        'flex h-[18px] items-start border-t border-b-2 border-t-[#808080] border-b-white bg-[#f0f0f0] pl-[2px] text-[11px] leading-4 text-black',
        STATUS_FONT
      )}
    >
      {[
        ['First', 'M4 3v9M11 3 6 7.500 11 12z'],
        ['Previous', 'M10 3 5 7.500 10 12z'],
        ['Next', 'M5 3l5 4.500L5 12z'],
        ['Last', 'M11 3v9M4 3l5 4.500L4 12z'],
      ].map(([name, d]) => (
        <button key={name} type="button" aria-label={`${name} layout`} className="border-r border-b border-[#a0a0a0]">
          <svg width="14" height="14" viewBox="0 0 15 15" fill="#555" stroke="#555">
            <path d={d} />
          </svg>
        </button>
      ))}
      <div className="relative h-[15px] w-[170px]">
        <svg aria-hidden="true" className="absolute inset-0" width="170" height="15" viewBox="0 0 170 15" fill="none">
          <path d="M1 0h52l-5 15H6z" fill="#212830" />
          <path d="M53 0l-5 14.500h54L108 0M102 4l4 10.500h52L163 0" stroke="#555" />
        </svg>
        <a href="#model" className="absolute left-3 text-white">
          Model
        </a>
        <a href="#layout1" className="absolute left-[57px]">
          Layout1
        </a>
        <a href="#layout2" className="absolute left-[112px]">
          Layout2
        </a>
      </div>
    </div>
  );
}

const modes: [string, string, boolean?][] = [
  ['INFER', 'w-[38px]'],
  ['SNAP', 'w-[35px]'],
  ['GRID', 'w-[33px]'],
  ['ORTHO', 'w-[45px]', true],
  ['POLAR', 'w-[42px]'],
  ['OSNAP', 'w-[43px]', true],
  ['3DOSNAP', 'w-[57px]'],
  ['OTRACK', 'w-[50px]'],
  ['DUCS', 'w-[36px]'],
  ['DYN', 'w-[29px]', true],
  ['LWT', 'w-[30px]', true],
  ['TPY', 'w-[27px]', true],
  ['QP', 'w-[21px]'],
  ['SC', 'w-[20px]'],
  ['AM', 'w-[22px]'],
];

function StatusButton({
  name,
  width = 'w-[22px]',
  pressed,
  children,
}: {
  name: string;
  width?: string;
  pressed?: boolean;
  children: ReactNode;
}) {
  return (
    <button
      type="button"
      aria-label={name}
      className={clsx(
        'flex shrink-0 items-center justify-center gap-1 border-r border-[#5c5c5c]',
        pressed ? 'bg-[#747474]' : 'bg-linear-to-b from-[#c0c0c0] to-[#9c9c9c]',
        width
      )}
    >
      {children}
    </button>
  );
}

const annotationPath = 'M8 1l2 6 5 6-1 1-5-2-1 2-1-2-5 2-1-1 5-6z';

function StatusBar() {
  return (
    <footer
      className={clsx(
        'flex h-[22px] border-t border-black bg-linear-to-b from-[#969696] to-[#747474] text-[11px] text-black',
        STATUS_FONT
      )}
    >
      <output className="flex w-[191px] shrink-0 items-center border-r border-[#4c4c4c] pt-px pl-3">
        1846.3870, 1346.8037, 0.0000
      </output>
      {modes.map(([name, width, on]) => (
        <button
          key={name}
          type="button"
          aria-pressed={!!on}
          className={clsx(
            'flex shrink-0 items-center justify-center border-r border-[#4c4c4c] bg-linear-to-b',
            on ? 'from-[#e2f4f8] via-[#8fc6d4] via-50% to-[#b4dde6]' : 'from-[#c0c0c0] to-[#a2a2a2]',
            width
          )}
        >
          {name}
        </button>
      ))}
      <div className="ml-auto flex pr-px">
        <StatusButton name="Model or paper space" width="w-[44px]">
          MODEL
        </StatusButton>
        <StatusButton name="Quick view layouts">
          <Icon>
            <path d="M2.500 1.500h11v10h-11zM0 14.500h16" fill="#f4f4f4" strokeWidth="1.500" />
            <path d="M5 4v5h5z" />
          </Icon>
        </StatusButton>
        <StatusButton name="Quick view drawings">
          <Icon>
            <path d="M1 2h6v7H1zM9 2h6v7H9z" fill="#f4f4f4" />
            <path d="M0 12.500h16" strokeWidth="3" />
          </Icon>
        </StatusButton>
        <div className="w-[12px]" />
        <StatusButton name="Annotation scale" width="w-[51px]">
          <Icon>
            <path d={annotationPath} fill="#f4f4f4" />
          </Icon>
          1:1
          <Caret large className="-mt-1 fill-black" />
        </StatusButton>
        <StatusButton name="Annotation visibility">
          <Icon>
            <path d={annotationPath} fill="#f4f4f4" />
            <circle cx="13" cy="8" r="2.500" fill="#ffe9a0" stroke="#f08a10" strokeWidth="1.500" />
            <path d="M13 11v4" stroke="#f0a030" strokeWidth="2" />
          </Icon>
        </StatusButton>
        <StatusButton name="Automatic scales">
          <Icon>
            <path d={annotationPath} fill="#b5b5b5" stroke="#7d7d7d" />
            <path d="M1 5l5-4-1 5z" fill="#c9c9c9" stroke="#7d7d7d" />
          </Icon>
        </StatusButton>
        <div className="w-[6px]" />
        <StatusButton name="Workspace switching">
          <Icon>
            <circle cx="8" cy="8" r="6.500" strokeWidth="2.500" strokeDasharray="2.500 1.500" />
            <circle cx="8" cy="8" r="5.500" fill="#f0f0f0" />
            <circle cx="8" cy="8" r="2.200" fill="#bbb" />
            <path d="M16 11v5h-5z" fill="#000" stroke="none" />
          </Icon>
        </StatusButton>
        <StatusButton name="Lock toolbars">
          <Icon>
            <path d="M1 7.500h9v7H1z" fill="#f4f4f4" />
            <path d="M5.500 10v3" stroke="#000" />
            <path d="M8.500 7V4q0-2.500 3-2.500T14.500 4v3" strokeWidth="2.400" />
            <path d="M8.500 7V4q0-2.500 3-2.500T14.500 4v3" stroke="#eee" strokeWidth=".8" />
          </Icon>
        </StatusButton>
        <StatusButton name="Hardware acceleration" width="w-[23px]">
          <Icon>
            <circle cx="8" cy="9" r="6.500" fill="#747a80" stroke="#8d9298" />
            <path d="M2 3l3 2M5 1l2 3M12 2l-4 7" stroke="#e4e4e4" strokeWidth="1.500" />
          </Icon>
        </StatusButton>
        <StatusButton name="Isolate objects" width="w-[31px]" pressed>
          <Icon>
            <path d="M5.500 10Q3 8 3 5.500a5 5 0 0 1 10 0Q13 8 10.500 10v2h-5z" fill="#fdf0b8" stroke="#b8a468" />
            <path d="M6 14.500h4" strokeWidth="2.500" stroke="#c8c8c8" />
          </Icon>
        </StatusButton>
        <StatusButton name="Status bar menu" width="w-[12px]">
          <Caret className="fill-black" />
        </StatusButton>
        <StatusButton name="Clean screen">
          <Icon>
            <path d="M1 1.500h14v13H1z" fill="#f8f8f8" />
            <path d="M1 3h14" strokeWidth="3" />
          </Icon>
        </StatusButton>
      </div>
    </footer>
  );
}

/* ---------- taskbar ---------- */

const apps: { name: string; open?: boolean; active?: boolean; art: ReactNode }[] = [
  {
    name: 'Start',
    art: <path d="M4 6.300l7-1v6.200H4zM12 5.200l8-1.200v7.500h-8zM4 12.500h7v6.200l-7-1zM12 12.500h8V20l-8-1.200z" fill="#fff" />,
  },
  {
    name: 'Search',
    art: (
      <g fill="none" stroke="#fff" strokeWidth="1.400">
        <circle cx="13" cy="9.500" r="5.300" />
        <path d="M9 13.500 3 20" />
      </g>
    ),
  },
  {
    name: 'Firefox',
    open: true,
    art: (
      <>
        <defs>
          <linearGradient id="fox" x1="0.8" y1="0" x2="0.2" y2="1">
            <stop offset="0" stopColor="#ffe226" />
            <stop offset=".5" stopColor="#ff8a16" />
            <stop offset="1" stopColor="#f0264d" />
          </linearGradient>
        </defs>
        <path d="M12 24C5 24 .500 18 1 12q0-5 3-9l1 4q3-3 6-2 1-4 4-5 0 4 4 6l1-2q4 5 3 10-1 10-11 10z" fill="url(#fox)" />
        <circle cx="12" cy="13" r="5.500" fill="#8a3ff0" />
        <path d="M5 9q4-1 6 1 3 0 4 0-3 1-4 3-1 4 5 3-2 3-6 2-5-2-5-9z" fill="#ff8c1c" />
      </>
    ),
  },
  {
    name: 'Edge',
    art: (
      <>
        <defs>
          <linearGradient id="edgeTop" x1="0" y1="0" x2="1" y2="0">
            <stop offset="0" stopColor="#2ba0e0" />
            <stop offset="1" stopColor="#57d869" />
          </linearGradient>
        </defs>
        <circle cx="12" cy="12" r="12" fill="#1478cc" />
        <path d="M0 11C1 4 6 0 12 0c7 0 12 4 12 9.500 0 4-3 5.500-6 5.500-4 0-3.500-1.500-3-3 .500-3-3-5-6-5-5 0-8 2-9 4z" fill="url(#edgeTop)" />
        <path d="M9 10q-3 4 0 9t8 4.500q4-1 6-5-6 3-10.500 0T9 10z" fill="#0c4fa0" />
        <path d="M14.500 12q-2 3.500 2 5.500 4 1 6.500-.500l-1 2q-6 3-10-1-3-4 2.500-6z" fill="#04072e" />
      </>
    ),
  },
  {
    name: 'Outlook',
    art: (
      <>
        <path d="M12 6h11v12H12z" fill="#dceaf6" />
        <path d="M13 9l3 5 7-6" fill="none" stroke="#0a64b8" strokeWidth="2" />
        <path d="M0 2.500 14 .500v23L0 21.500z" fill="#0a70c8" />
        <ellipse cx="7" cy="12" rx="3" ry="4" fill="none" stroke="#fff" strokeWidth="2" />
      </>
    ),
  },
  {
    name: 'File Explorer',
    open: true,
    art: (
      <>
        <path d="M1 3h8l2 2h11v5H1z" fill="#e8a512" />
        <path d="M1 6h22v14H1z" fill="#fcd667" />
        <path d="M5 21v-8q0-1.500 1.500-1.500h11Q19 11.500 19 13v8h-4v-4H9v4z" fill="#3c97dc" />
      </>
    ),
  },
  {
    name: 'BlueStacks',
    art: (
      <>
        <path d="M0 17l12-6 12 6-12 6z" fill="#2a7fd8" />
        <path d="M0 14l12-6 12 6-12 6z" fill="#e83a30" />
        <path d="M0 11l12-6 12 6-12 6z" fill="#f8d030" />
        <path d="M0 7.500 12 1l12 6.500-12 6.500z" fill="#7cc832" />
        <ellipse cx="12" cy="7" rx="5" ry="3.500" fill="#13203a" />
        <ellipse cx="12" cy="7" rx="2" ry="1.500" fill="#9a7ad0" />
      </>
    ),
  },
  {
    name: 'Cloud backup',
    art: (
      <>
        <circle cx="12" cy="12" r="11" fill="#92c51c" />
        <path d="M7 17q-4-.500-3.500-4 .500-3 3.500-3Q8 6 12 6t5 4q3 0 3.500 3.500T17 17z" fill="#fff" />
        <path d="M9 9h6v8H9zM9 13h6" fill="none" stroke="#92c51c" strokeWidth="1.500" />
      </>
    ),
  },
  {
    name: 'Transfer',
    art: (
      <g fill="#000" stroke="#fff" strokeWidth="1">
        <path d="M3 8l7-4v2.500h11v3H10V12z" />
        <path d="M21 16l-7-4v2.500H5v3h9V20z" />
      </g>
    ),
  },
  {
    name: 'TeamViewer',
    art: (
      <>
        <rect width="24" height="24" rx="4" fill="#0a0f50" />
        <circle cx="12" cy="12" r="10" fill="#fff" />
        <path d="M4 12l5-4v3h6V8l5 4-5 4v-3H9v3z" fill="#0a1050" />
      </>
    ),
  },
  {
    name: 'IPTV',
    art: (
      <>
        <circle cx="12" cy="12" r="12" fill="#5b3df0" />
        <path d="M5 10V7h14v3M9 2l1 3M13 3v2M6 19h12M9 21h6" stroke="#cfc6ff" fill="none" />
        <text x="12" y="17" textAnchor="middle" fontSize="8" fontWeight="700" fill="#fff">
          IPTV
        </text>
      </>
    ),
  },
  {
    name: 'Calculator',
    open: true,
    art: (
      <>
        <rect x="3" y="0" width="18" height="24" rx="1" fill="#69727c" />
        <rect x="5" y="2" width="14" height="4" fill="#3ccbf4" />
        <path d="M5 8h4v4H5zM10 8h4v4h-4zM15 8h4v4h-4zM5 13h4v4H5zM10 13h4v4h-4zM5 18h4v4H5zM10 18h4v4h-4z" fill="#c9ced4" />
        <path d="M15 13h4v9h-4z" fill="#0f4f90" />
      </>
    ),
  },
  {
    name: 'Word',
    open: true,
    art: (
      <>
        <path d="M12 3h11v18H12z" fill="#fff" />
        <path d="M14 7h8M14 10h8M14 13h8M14 16h8" stroke="#2a5699" strokeWidth="1.200" />
        <path d="M0 3 14 .500v23L0 21z" fill="#2a5699" />
        <path d="M3 8.500l2 7 2-6.500 2 6.500 2-7" fill="none" stroke="#fff" strokeWidth="1.600" />
      </>
    ),
  },
  {
    name: 'Excel',
    open: true,
    art: (
      <>
        <path d="M12 3h11v18H12z" fill="#fff" />
        <path d="M14 6h8M14 9h8M14 12h8M14 15h8M14 18h8M18 4v16" stroke="#1f7244" strokeWidth="1.200" />
        <path d="M0 3 14 .500v23L0 21z" fill="#1f7244" />
        <path d="M4 8l6 8M10 8l-6 8" fill="none" stroke="#fff" strokeWidth="2" />
      </>
    ),
  },
  {
    name: 'AutoCAD',
    open: true,
    active: true,
    art: (
      <>
        <defs>
          <linearGradient id="cadTile" x1="1" y1="0" x2="0" y2="1">
            <stop offset="0" stopColor="#ffffff" />
            <stop offset="1" stopColor="#e02828" />
          </linearGradient>
        </defs>
        <rect width="24" height="24" fill="url(#cadTile)" />
        <path d="M12 2l8 15-5 1-3-3-3 3-5-1z" fill="#c01c14" />
        <path d="M9 12l-5 5 5-1 3-2 3 2 5 1-5-5-3 2z" fill="#3c0606" />
      </>
    ),
  },
];

function Taskbar() {
  return (
    <nav aria-label="Taskbar" className="flex h-10 bg-[#04072e] text-white">
      {apps.map(({ name, open, active, art }) => (
        <button
          key={name}
          type="button"
          aria-label={name}
          className={clsx('flex w-[49px] flex-col items-center justify-between pt-2', active && 'bg-[#0b1266]')}
        >
          <svg width="24" height="24" viewBox="0 0 24 24">
            {art}
          </svg>
          {open && <span className={clsx('h-[2px] bg-[#8484c4]', active ? 'w-full' : 'w-10')} />}
        </button>
      ))}
      <time className="ml-auto flex flex-col items-center pt-[2px] pr-1 leading-[18px]">
        <span>13:26</span>
        <span>11-3-2024</span>
      </time>
    </nav>
  );
}

export default function App() {
  return (
    <div className={clsx('flex h-screen flex-col overflow-hidden text-[12px] leading-4', UI_FONT)}>
      <TitleBar />
      <MenuTabs />
      <Ribbon />
      <div className="h-px bg-white" />
      <QuickAccess />
      <FileTabs />
      <div className="h-[7px] border-b-2 border-[#8a8a8a] bg-[#6a6a6a]" />
      <Viewport />
      <LayoutTabs />
      <StatusBar />
      <Taskbar />
    </div>
  );
}
